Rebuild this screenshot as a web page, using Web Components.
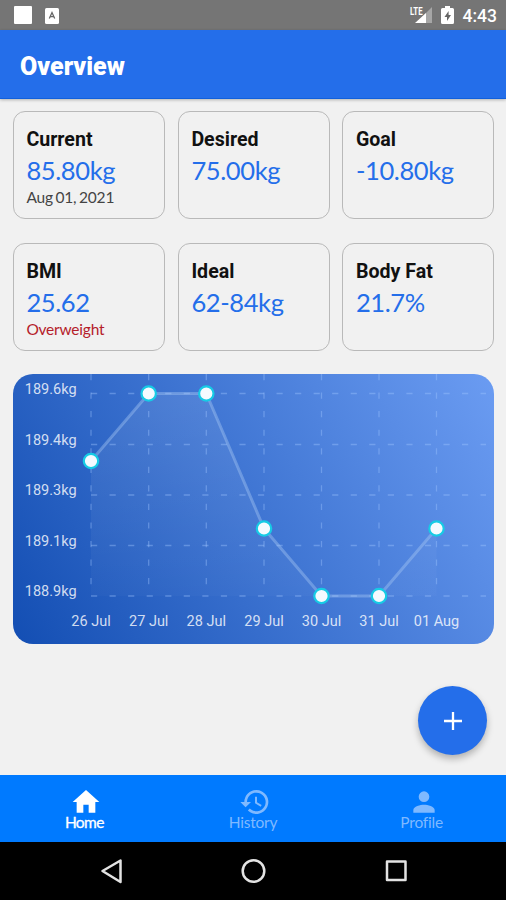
<!DOCTYPE html>
<html lang="en"><head><meta charset="utf-8"><title>Overview</title>
<style>html,body{margin:0;height:100%}body{font-family:Roboto,sans-serif;background:#f1f1f1}</style></head>
<body><weight-app></weight-app>
<script>
const define = (name, html) => customElements.define(name, class extends HTMLElement {
  connectedCallback() {
    if (this.shadowRoot) return;
    const t = document.createElement('template');
    t.innerHTML = typeof html === 'function' ? html(this) : html;
    this.attachShadow({mode: 'open'}).append(t.content.cloneNode(true));
  }
});

define('status-bar', `<style>
:host{display:flex;align-items:center;height:30px;background:#757575;color:#fff;box-sizing:border-box;padding:0 9px 0 14px}
.app{width:18px;height:18px;background:#fff;border-radius:1px}
.key{margin-left:13px;margin-top:1px}.sig{margin-left:auto}.bat{margin-left:8px}
.time{font:500 17.5px/28px Roboto,sans-serif;margin-left:9px;padding-top:2px}
svg{display:block}
</style><div class="app"></div>
<svg class="key" width="14" height="16"><rect width="14" height="16" rx="1.5" fill="#fff"/><path d="M4.3 10.5 7 4.5l2.7 6M5.3 8.7h3.4" fill="none" stroke="#666" stroke-width="1.3"/></svg>
<svg class="sig" width="24" height="20"><path d="M23 2v16H7z" fill="#a6a6a6"/><path d="M17 8v10H6z" fill="#fff"/><text x="1" y="9.500" fill="#fff" font-family="Roboto,sans-serif" font-weight="700" font-size="11" textLength="12.500" lengthAdjust="spacingAndGlyphs" stroke="#757575" stroke-width="1" paint-order="stroke">LTE</text></svg>
<svg class="bat" width="13" height="18"><path d="M4 0h5v2h2.500Q13 2 13 3.500v13Q13 18 11.500 18h-10Q0 18 0 16.500v-13Q0 2 1.500 2H4z" fill="#fff"/><path d="M7.600 5 3.500 11h2.500v4L10 9H7.600z" fill="#666"/></svg>
<span class="time">4:43</span>`);

define('title-bar', `<style>
:host{display:block;height:69px;box-sizing:border-box;padding-left:20px;background:#246eea;color:#fff;font:900 25px/73px Roboto,sans-serif;border-bottom:1px solid #1160dc;box-shadow:0 1px 3px #0004;z-index:1}
</style><slot></slot>`);

define('stat-card', e => `<style>
:host{display:block;box-sizing:border-box;border:1.500px solid #b9b9b9;border-radius:12px;padding:15.500px 0 0 12.900px;white-space:nowrap}
.l{font:700 19.600px/24px Roboto,sans-serif;color:#111}
.v{font:400 25.500px/30px Lato,sans-serif;letter-spacing:-.38px;color:#246eea;margin-top:3px}
.n{font:400 15.500px/20px Lato,sans-serif;letter-spacing:-.22px;word-spacing:-1px;color:${e.hasAttribute('alert') ? '#b5202a' : '#444'};margin-top:2.500px}
</style><div class="l">${e.getAttribute('label')}</div><div class="v">${e.getAttribute('value')}</div><div class="n"><slot></slot></div>`);

define('weight-chart', () => {
  const xs = [78, 135.700, 193.300, 251, 308.500, 366, 423.500];
  const ys = [19.500, 70.500, 121, 171.500, 222];
  const py = [87, 19.500, 19.500, 154.500, 222, 222, 154.500];
  const days = ['26 Jul','27 Jul','28 Jul','29 Jul','30 Jul','31 Jul','01 Aug'];
  const kg = ['189.6kg','189.4kg','189.3kg','189.1kg','188.9kg'];
  const pts = xs.map((x, i) => x + ',' + py[i]).join(' ');
  return `<style>
:host{display:block;height:270px;border-radius:20px;overflow:hidden;background:linear-gradient(60.700deg,#134eb3,#6b9cf2)}
svg{display:block}text{font:400 14.500px Roboto,sans-serif;fill:#fff;fill-opacity:.8}
</style><svg width="481" height="270">
<defs><linearGradient id="area" x1="0" y1="0" x2="0" y2="1"><stop offset="0" stop-color="#fff" stop-opacity=".09"/><stop offset="1" stop-color="#fff" stop-opacity=".02"/></linearGradient></defs>
<polygon points="78,222 ${pts} 423.500,222" fill="url(#area)"/>
<g stroke="#9fc5ff" stroke-opacity=".4" stroke-width="1.300" stroke-dasharray="6.200 12.350">
${ys.map(y => `<line x1="78" x2="473" y1="${y}" y2="${y}"/>`).join('')}
${xs.map(x => `<line x1="${x}" x2="${x}" y1="0" y2="222"/>`).join('')}</g>
<polyline points="${pts}" fill="none" stroke="#a9cbf5" stroke-opacity=".4" stroke-width="3"/>
${xs.map((x, i) => `<circle cx="${x}" cy="${py[i]}" r="7.200" fill="#f4faff" stroke="#16cbe5" stroke-width="2.200"/>`).join('')}
${kg.map((t, i) => `<text x="63.600" y="${ys[i]}" text-anchor="end">${t}</text>`).join('')}
${xs.map((x, i) => `<text x="${x}" y="252" text-anchor="middle">${days[i]}</text>`).join('')}
</svg>`;
});

define('add-button', `<style>
:host{display:flex;align-items:center;justify-content:center;width:69px;height:69px;border-radius:50%;background:#246eea;box-shadow:0 4px 7px #0004}
</style><svg width="18" height="18"><path d="M9 0v18M0 9h18" stroke="#fff" stroke-width="2.300"/></svg>`);

const icons = {
  home: 'M10 20v-6h4v6h5v-8h3L12 3 2 12h3v8z',
  history: 'M13 3a9 9 0 0 0-9 9H1l3.890 3.890.070.140L9 12H6a7 7 0 1 1 2.060 4.940l-1.420 1.420A9 9 0 1 0 13 3zm-1 5v5l4.280 2.540.720-1.210-3.500-2.080V8z',
  profile: 'M12 12a4 4 0 1 0 0-8 4 4 0 0 0 0 8zm0 2c-2.670 0-8 1.340-8 4v2h16v-2c0-2.660-5.330-4-8-4z'
};
define('tab-item', e => `<style>
:host{flex:1;display:flex;flex-direction:column;align-items:center;padding-top:11px;color:${e.hasAttribute('active') ? '#fff' : '#7fb9ff'};font:400 15.500px/20px Lato,sans-serif;letter-spacing:-.2px}
:host([active]){-webkit-text-stroke:.3px #fff;letter-spacing:-.6px}
svg{display:block;margin:0 0 -6px 4px;fill:currentColor}
</style><svg width="32" height="32" viewBox="0 0 24 24"><path d="${icons[e.getAttribute('icon')]}"/></svg><span><slot></slot></span>`);

define('tab-bar', `<style>:host{display:flex;height:67px;background:#007aff;overflow:hidden}</style><slot></slot>`);

define('system-nav', `<style>:host{display:flex;height:58px;background:#000;align-items:center;justify-content:center}svg{display:block}</style>
<svg width="506" height="58" fill="none" stroke="#e3e3e3" stroke-width="2.500" stroke-linejoin="round"><path d="M120.500 18.500v21.500L102.500 29z"/><circle cx="253.500" cy="29" r="10.800"/><rect x="387" y="19.500" width="18.500" height="18.500"/></svg>`);

define('weight-app', `<style>
:host{display:flex;flex-direction:column;width:506px;height:900px;background:#f1f1f1;overflow:hidden;position:relative}
main{flex:1;padding:12px 12px 0 12.500px}
.stats{display:grid;grid-template-columns:152.500px 152px 152px;justify-content:space-between;row-gap:24.500px;grid-auto-rows:107.500px;margin-bottom:23px}
add-button{position:absolute;right:19px;top:686px}
</style>
<status-bar></status-bar><title-bar>Overview</title-bar>
<main><div class="stats">
<stat-card label="Current" value="85.80kg">Aug 01, 2021</stat-card>
<stat-card label="Desired" value="75.00kg"></stat-card>
<stat-card label="Goal" value="-10.80kg"></stat-card>
<stat-card label="BMI" value="25.62" alert>Overweight</stat-card>
<stat-card label="Ideal" value="62-84kg"></stat-card>
<stat-card label="Body Fat" value="21.7%"></stat-card>
</div><weight-chart></weight-chart></main>
<add-button></add-button>
<tab-bar><tab-item icon="home" active>Home</tab-item><tab-item icon="history">History</tab-item><tab-item icon="profile">Profile</tab-item></tab-bar>
<system-nav></system-nav>`);
</script></body></html>
